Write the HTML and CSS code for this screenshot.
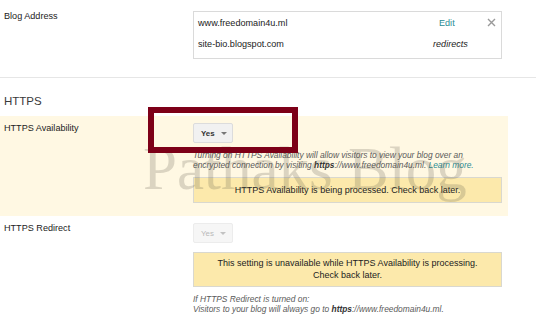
FILE: index.html
```html
<!DOCTYPE html>
<html>
<head>
    <title>Blog Settings</title>
    <link rel="stylesheet" href="styles.css">
</head>
<body>
    <div class="page">
        <div class="setting address-row">
            <div class="label">Blog Address</div>
            <div class="address-box">
                <div class="address-line">
                    <span class="url">www.freedomain4u.ml</span>
                    <span class="edit">Edit</span>
                    <span class="remove">
                        <svg width="9" height="9" viewBox="0 0 9 9"><path d="M1 1L8 8M8 1L1 8" stroke="#999" stroke-width="1.4"/></svg>
                    </span>
                </div>
                <div class="address-line">
                    <span class="url">site-bio.blogspot.com</span>
                    <span class="redirects">redirects</span>
                </div>
            </div>
        </div>

        <div class="divider"></div>

        <h2 class="section-title">HTTPS</h2>

        <div class="setting highlight">
            <div class="label">HTTPS Availability</div>
            <div class="content">
                <div class="select">Yes <span class="caret"></span></div>
                <p class="help">Turning on HTTPS Availability will allow visitors to view your blog over an encrypted connection by visiting <b>https</b>://www.freedomain4u.ml. <span class="link">Learn more.</span></p>
                <div class="notice">HTTPS Availability is being processed. Check back later.</div>
            </div>
        </div>

        <div class="setting redirect">
            <div class="label">HTTPS Redirect</div>
            <div class="content">
                <div class="select disabled">Yes <span class="caret"></span></div>
                <div class="notice two-line">This setting is unavailable while HTTPS Availability is processing.<br>Check back later.</div>
                <p class="help">If HTTPS Redirect is turned on:<br>Visitors to your blog will always go to <b>https</b>://www.freedomain4u.ml.</p>
            </div>
        </div>

        <div class="watermark">Pathaks Blog</div>
        <div class="marker"></div>
    </div>
</body>
</html>
```

FILE: styles.css
```css
body {
    margin: 0;
    font-family: "Liberation Sans", Arial, sans-serif;
    font-size: 9.1px;
    color: #222;
    background: #fff;
}
.page {
    position: relative;
    width: 536px;
    height: 317px;
    overflow: hidden;
}
.setting {
    display: grid;
    grid-template-columns: 189px 309px;
    width: 508px;
    padding-left: 4px;
    box-sizing: border-box;
}
.label {
    line-height: 11px;
}
.address-row {
    padding-top: 11px;
}
.address-box {
    border: 1px solid #dadada;
    padding: 0 0 2px;
    height: 48px;
    box-sizing: border-box;
}
.address-line {
    display: flex;
    align-items: center;
    height: 21px;
    padding-left: 4px;
}
.url {
    flex: 1;
}
.edit {
    color: #2b8c93;
    width: 48px;
}
.remove {
    display: flex;
    width: 14px;
}
.redirects {
    font-style: italic;
    width: 68px;
}
.divider {
    margin-top: 18px;
    border-top: 1px solid #e6e6e6;
}
.section-title {
    margin: 16px 0 8px 4px;
    font-size: 11.5px;
    line-height: 14px;
    font-weight: normal;
    color: #3a3a3a;
}
.highlight {
    background: #fff8e3;
    padding-top: 7px;
    padding-bottom: 13px;
}
.redirect {
    padding-top: 7px;
}
.select {
    width: 40px;
    height: 20px;
    box-sizing: border-box;
    border: 1px solid #dcdcdc;
    border-radius: 2px;
    background: #f1f1f1;
    font-size: 7.9px;
    font-weight: bold;
    color: #333;
    display: flex;
    align-items: center;
    padding-left: 7px;
    gap: 6px;
}
.caret {
    width: 0;
    height: 0;
    border-left: 3px solid transparent;
    border-right: 3px solid transparent;
    border-top: 3px solid #777;
}
.select.disabled {
    background: #f6f6f6;
    border-color: #ececec;
    color: #b9b9b9;
    font-weight: normal;
}
.select.disabled .caret {
    border-top-color: #c2c2c2;
}
.help {
    margin: 7px 0 0;
    max-width: 290px;
    font-size: 8.4px;
    line-height: 10px;
    font-style: italic;
    color: #5a5a5a;
}
.help b {
    color: #333;
}
.link {
    color: #2b8c93;
}
.notice {
    margin-top: 7px;
    height: 26px;
    box-sizing: border-box;
    border: 1px solid #d9d8cf;
    background: #fce9ab;
    font-size: 9px;
    line-height: 24px;
    text-align: center;
    color: #222;
}
.notice.two-line {
    margin-top: 9px;
    height: 35px;
    padding-top: 4px;
    line-height: 12px;
}
.watermark {
    position: absolute;
    left: 143px;
    top: 138px;
    font-family: "Liberation Serif", "Times New Roman", serif;
    font-size: 61px;
    line-height: 1;
    color: rgba(90, 85, 75, 0.22);
    white-space: nowrap;
}
.marker {
    position: absolute;
    left: 148px;
    top: 107px;
    width: 150px;
    height: 46px;
    box-sizing: border-box;
    border: 6px solid #7d0018;
}
```
